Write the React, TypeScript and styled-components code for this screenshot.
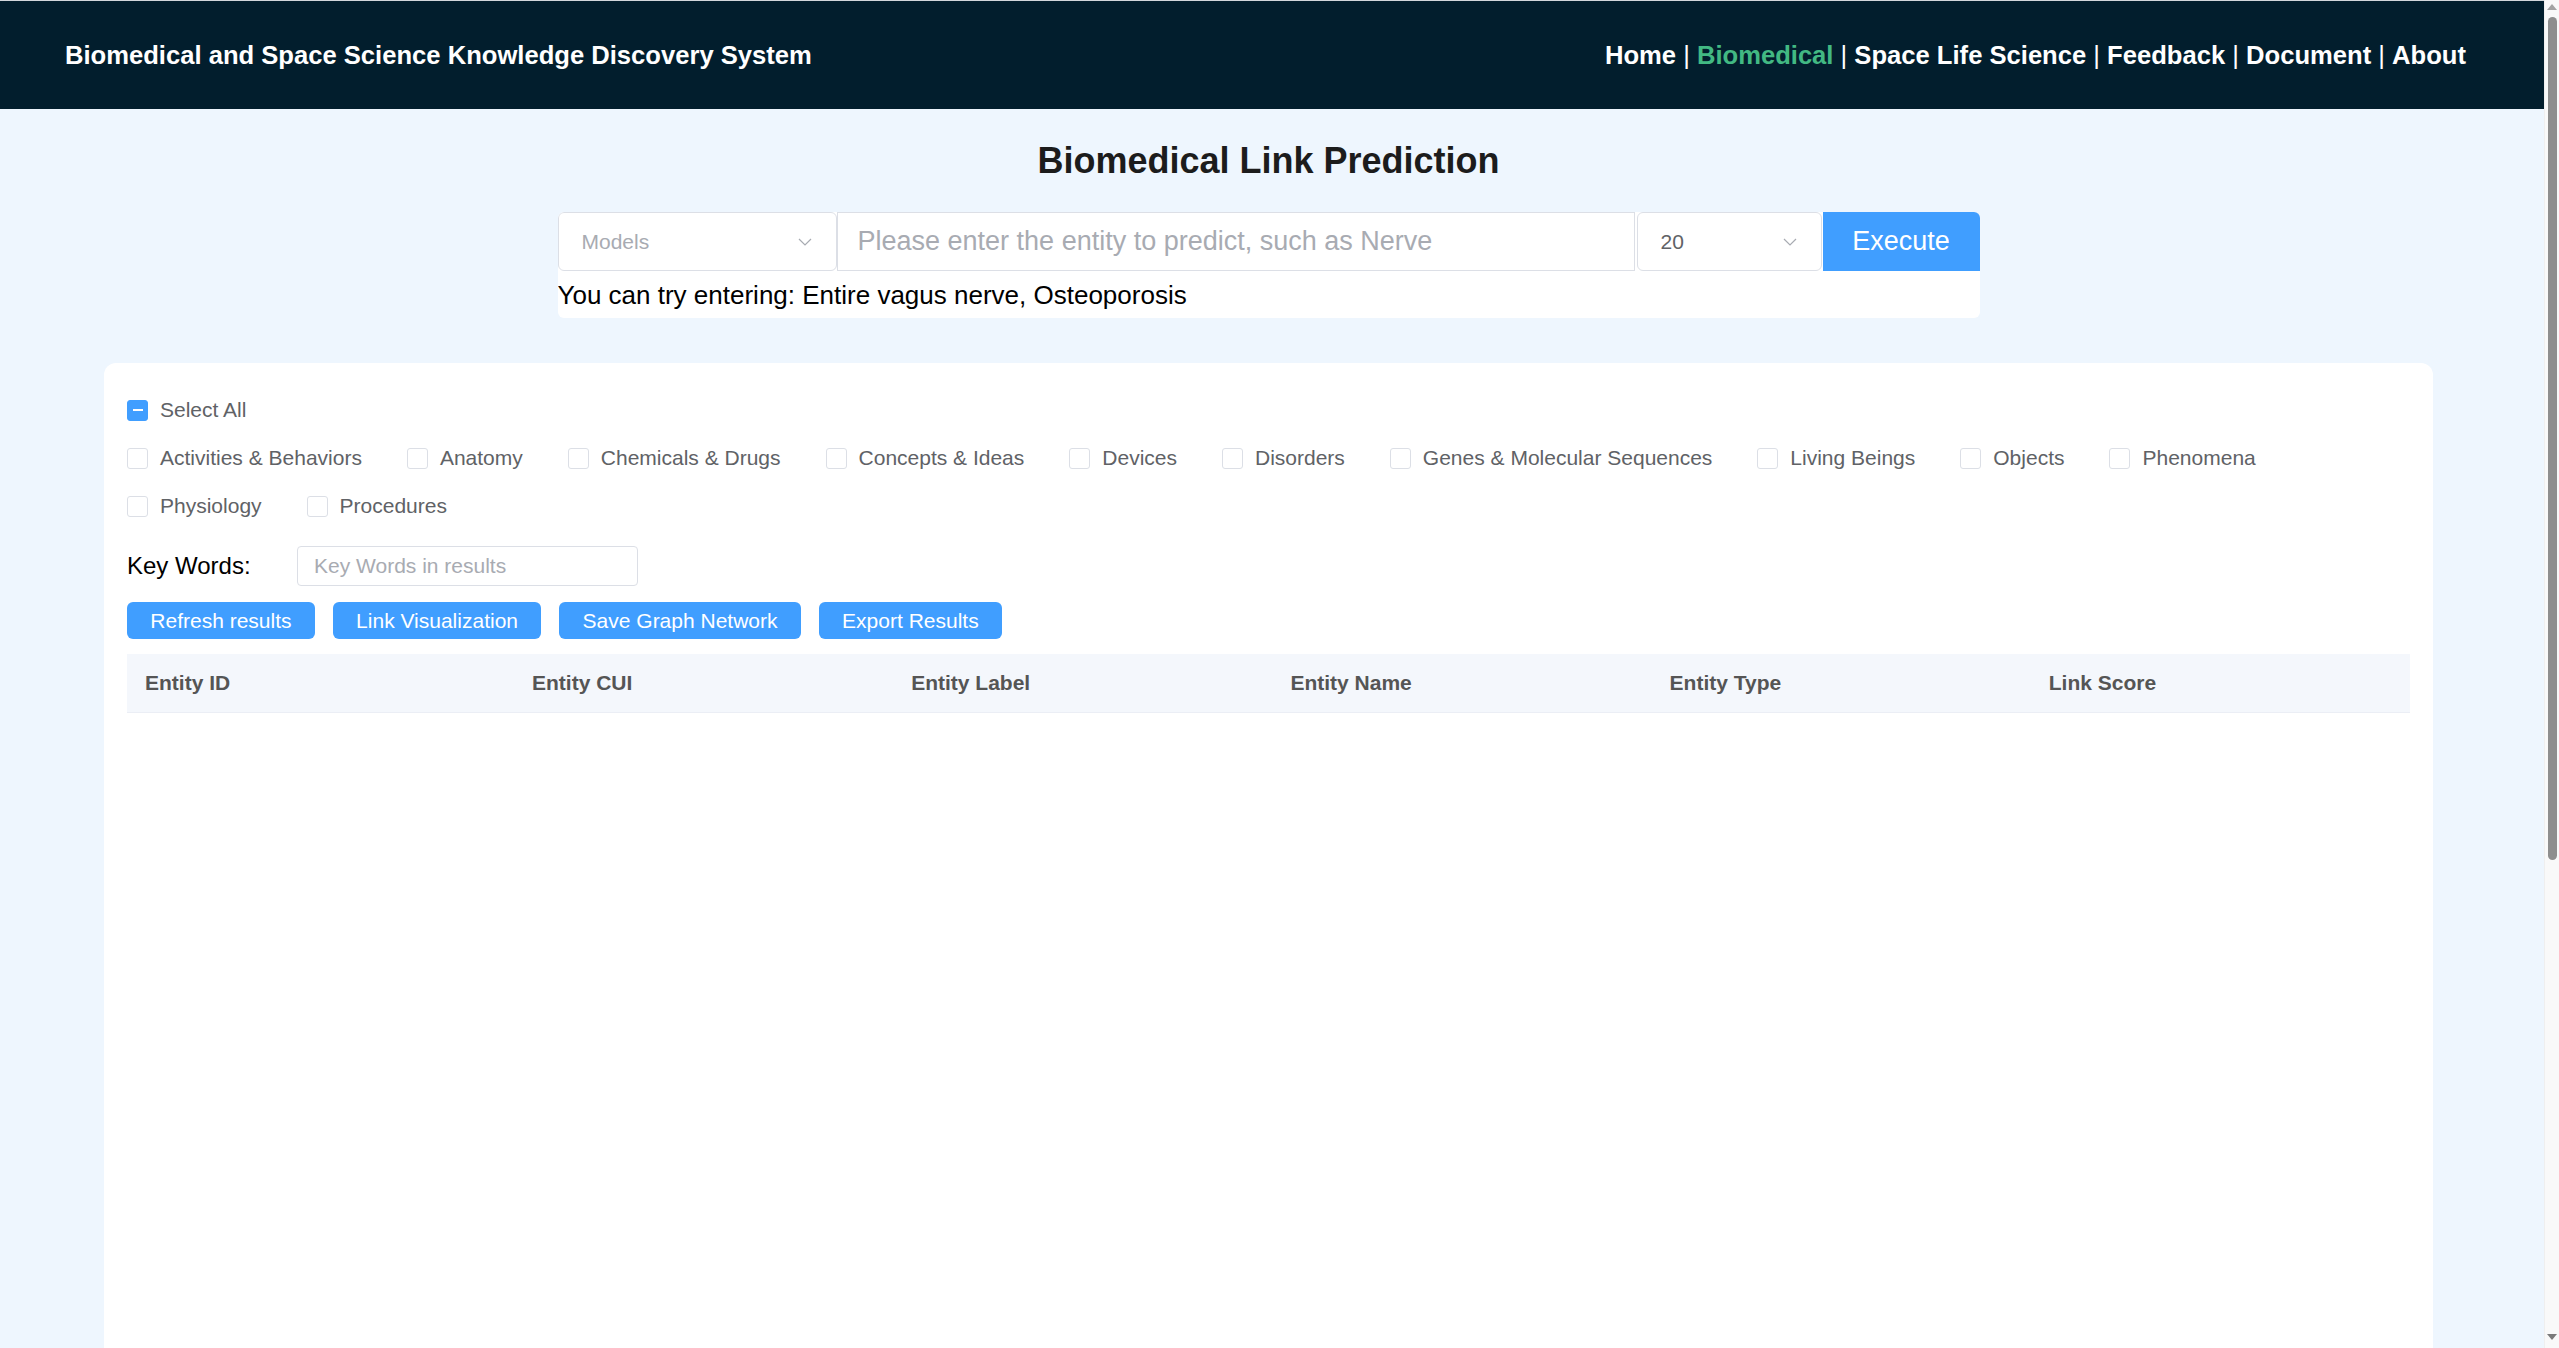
import React from 'react';
import styled, { createGlobalStyle } from 'styled-components';

const GlobalStyle = createGlobalStyle`
  html, body { margin: 0; padding: 0; }
  body {
    font-family: "Liberation Sans", Arial, Helvetica, sans-serif;
    background: #eef6fe;
  }
  * { box-sizing: border-box; }
`;

const Page = styled.div`
  display: flex;
  align-items: stretch;
  background: #eef6fe;
`;

const Content = styled.div`
  flex: 1;
  min-width: 0;
  border-top: 1px solid #d3d7db;
`;

const ScrollGutter = styled.div`
  position: relative;
  width: 15px;
  flex: none;
  background: #f9f9f9;
  border-left: 1px solid #efefef;
`;

const ScrollThumb = styled.div`
  position: absolute;
  top: 17px;
  left: 3px;
  width: 9px;
  height: 843px;
  border-radius: 5px;
  background: #8e8e8e;
`;

const ScrollArrow = styled.div<{ $down?: boolean }>`
  position: absolute;
  left: 2px;
  top: ${(p) => (p.$down ? '1334px' : '4px')};
  width: 0;
  height: 0;
  border-left: 5px solid transparent;
  border-right: 5px solid transparent;
  ${(p) =>
    p.$down ? 'border-top: 6px solid #7a7a7a;' : 'border-bottom: 6px solid #a3a3a3;'}
`;

const Header = styled.header`
  height: 108px;
  background: #021e2d;
  display: flex;
  align-items: center;
  justify-content: space-between;
  padding: 0 78px 0 65px;
  color: #ffffff;
  font-weight: bold;
  font-size: 25.6px;
`;

const Brand = styled.div`
  white-space: nowrap;
`;

const Nav = styled.nav`
  display: flex;
  align-items: center;
  white-space: pre;
`;

const NavLink = styled.span<{ $active?: boolean }>`
  color: ${(p) => (p.$active ? '#42b983' : '#ffffff')};
  font-weight: bold;
`;

const Sep = styled.span`
  font-weight: normal;
  color: #ffffff;
`;

const Main = styled.main`
  display: flex;
  flex-direction: column;
  align-items: center;
  padding: 0 7px 30px 0;
`;

const Title = styled.h2`
  margin: 31px 0 31px;
  font-size: 36px;
  line-height: 41px;
  font-weight: bold;
  color: #1c1c1c;
`;

const SearchBox = styled.div`
  width: 1422px;
  background: #ffffff;
  border-radius: 6px;
  overflow: hidden;
`;

const SearchRow = styled.div`
  display: flex;
  height: 59px;
`;

const SelectBox = styled.div<{ $w: number; $filled?: boolean }>`
  width: ${(p) => p.$w}px;
  flex: none;
  height: 100%;
  border: 1px solid #dcdfe6;
  border-radius: 6px;
  background: #ffffff;
  display: flex;
  align-items: center;
  justify-content: space-between;
  padding: 0 24px 0 23px;
  font-size: 21px;
  color: ${(p) => (p.$filled ? '#606266' : '#a8abb2')};
`;

const Chevron = () => (
  <svg width="14" height="8" viewBox="0 0 14 8" fill="none">
    <path d="M1 1 L7 7 L13 1" stroke="#a8abb2" strokeWidth="1.2" />
  </svg>
);

const EntityInput = styled.input`
  flex: 1;
  height: 100%;
  border: 1px solid #dcdfe6;
  border-radius: 0;
  margin-right: 2px;
  padding: 0 20px;
  font-family: inherit;
  font-size: 27px;
  color: #303133;
  outline: none;
  &::placeholder { color: #a8abb2; }
`;

const ExecuteButton = styled.button`
  width: 157px;
  flex: none;
  height: 100%;
  margin-left: 1px;
  border: none;
  background: #409eff;
  color: #ffffff;
  font-family: inherit;
  font-size: 27px;
  cursor: pointer;
`;

const Hint = styled.div`
  padding: 10px 0 9px 0;
  line-height: 28px;
  font-size: 26px;
  color: #000000;
`;

const Card = styled.section`
  width: 2329px;
  margin-top: 45px;
  background: #ffffff;
  border-radius: 12px;
  padding: 23px 23px 23px;
`;

const CheckRow = styled.div`
  display: flex;
  flex-wrap: wrap;
  column-gap: 45px;
`;

const CheckLabel = styled.label`
  display: inline-flex;
  align-items: center;
  height: 48px;
  font-size: 21px;
  color: #606266;
  white-space: nowrap;
`;

const Box = styled.span<{ $on?: boolean }>`
  width: 21px;
  height: 21px;
  flex: none;
  border-radius: 3px;
  border: 1px solid ${(p) => (p.$on ? '#409eff' : '#dcdfe6')};
  background: ${(p) => (p.$on ? '#409eff' : '#ffffff')};
  margin-right: 12px;
  display: flex;
  align-items: center;
  justify-content: center;
`;

const Dash = styled.span`
  width: 10px;
  height: 2px;
  background: #ffffff;
`;

const KeyRow = styled.div`
  display: flex;
  align-items: center;
  margin-top: 16px;
  height: 40px;
`;

const KeyLabel = styled.span`
  width: 170px;
  font-size: 24px;
  color: #000000;
`;

const KeyInput = styled.input`
  width: 341px;
  height: 40px;
  border: 1px solid #dcdfe6;
  border-radius: 4px;
  padding: 0 16px;
  font-family: inherit;
  font-size: 21px;
  outline: none;
  &::placeholder { color: #a8abb2; }
`;

const ButtonRow = styled.div`
  display: flex;
  gap: 18px;
  margin-top: 16px;
`;

const ActionButton = styled.button`
  height: 37px;
  padding: 0 23.3px;
  border: none;
  border-radius: 6px;
  background: #409eff;
  color: #ffffff;
  font-family: inherit;
  font-size: 21px;
  cursor: pointer;
`;

const Table = styled.div`
  margin-top: 15px;
`;

const HeadRow = styled.div`
  display: grid;
  grid-template-columns: 387px repeat(5, 1fr);
  height: 59px;
  align-items: center;
  background: #f4f7fc;
  border-bottom: 1px solid #ebeef5;
`;

const HeadCell = styled.div`
  padding-left: 18px;
  font-size: 21px;
  font-weight: bold;
  color: #555555;
`;

const TableBody = styled.div`
  height: 1334px;
`;

const categories = [
  'Activities & Behaviors',
  'Anatomy',
  'Chemicals & Drugs',
  'Concepts & Ideas',
  'Devices',
  'Disorders',
  'Genes & Molecular Sequences',
  'Living Beings',
  'Objects',
  'Phenomena',
  'Physiology',
  'Procedures',
];

const columns = ['Entity ID', 'Entity CUI', 'Entity Label', 'Entity Name', 'Entity Type', 'Link Score'];

const navItems = ['Home', 'Biomedical', 'Space Life Science', 'Feedback', 'Document', 'About'];

export default function App() {
  return (
    <Page>
      <GlobalStyle />
      <Content>
        <Header>
          <Brand>Biomedical and Space Science Knowledge Discovery System</Brand>
          <Nav>
            {navItems.map((n, i) => (
              <React.Fragment key={n}>
                {i > 0 && <Sep> | </Sep>}
                <NavLink $active={n === 'Biomedical'}>{n}</NavLink>
              </React.Fragment>
            ))}
          </Nav>
        </Header>
        <Main>
          <Title>Biomedical Link Prediction</Title>
          <SearchBox>
            <SearchRow>
              <SelectBox $w={279}>
                <span>Models</span>
                <Chevron />
              </SelectBox>
              <EntityInput placeholder="Please enter the entity to predict, such as Nerve" />
              <SelectBox $w={185} $filled>
                <span>20</span>
                <Chevron />
              </SelectBox>
              <ExecuteButton>Execute</ExecuteButton>
            </SearchRow>
            <Hint>You can try entering: Entire vagus nerve, Osteoporosis</Hint>
          </SearchBox>
          <Card>
            <CheckRow>
              <CheckLabel>
                <Box $on>
                  <Dash />
                </Box>
                Select All
              </CheckLabel>
            </CheckRow>
            <CheckRow>
              {categories.map((c) => (
                <CheckLabel key={c}>
                  <Box />
                  {c}
                </CheckLabel>
              ))}
            </CheckRow>
            <KeyRow>
              <KeyLabel>Key Words:</KeyLabel>
              <KeyInput placeholder="Key Words in results" />
            </KeyRow>
            <ButtonRow>
              <ActionButton>Refresh results</ActionButton>
              <ActionButton>Link Visualization</ActionButton>
              <ActionButton>Save Graph Network</ActionButton>
              <ActionButton>Export Results</ActionButton>
            </ButtonRow>
            <Table>
              <HeadRow>
                {columns.map((c) => (
                  <HeadCell key={c}>{c}</HeadCell>
                ))}
              </HeadRow>
              <TableBody />
            </Table>
          </Card>
        </Main>
      </Content>
      <ScrollGutter>
        <ScrollArrow />
        <ScrollThumb />
        <ScrollArrow $down />
      </ScrollGutter>
    </Page>
  );
}
